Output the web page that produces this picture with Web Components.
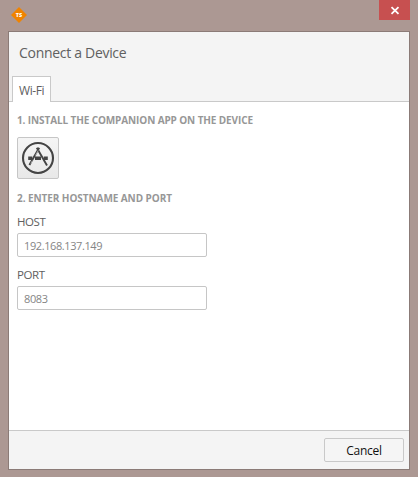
<!DOCTYPE html>
<html lang="en">
<head>
<meta charset="utf-8">
<title>Connect a Device</title>
<style>
html, body { margin: 0; height: 100%; overflow: hidden; }
body { font-family: "Open Sans", "Noto Sans", sans-serif; color: #606060; }
</style>
</head>
<body>
<app-window>
  <dialog-header slot="header" heading="Connect a Device" tab="Wi-Fi"></dialog-header>
  <section-title>1. INSTALL THE COMPANION APP ON THE DEVICE</section-title>
  <store-button></store-button>
  <section-title style="--ls:-0.07px;margin-bottom:7px">2. ENTER HOSTNAME AND PORT</section-title>
  <text-field label="HOST" value="192.168.137.149"></text-field>
  <text-field label="PORT" value="8083"></text-field>
  <push-button slot="footer">Cancel</push-button>
</app-window>
<script>
const define = (name, render) => customElements.define(name, class extends HTMLElement {
  connectedCallback() {
    if (!this.shadowRoot) this.attachShadow({ mode: "open" }).innerHTML = render(this);
  }
});

define("app-window", () => `<style>
:host { display: flex; flex-direction: column; box-sizing: border-box; width: 418px; height: 477px; padding: 0 8px 7px; background: #ac9893; }
.bar { display: flex; justify-content: space-between; height: 31px; flex: none; }
.logo { margin: 7px 0 0 3px; width: 16px; height: 16px; display: block; }
.close { width: 31px; height: 20px; background: #c75050; display: block; }
.client { flex: 1; display: flex; flex-direction: column; border: 1px solid #8b7b77; background: #fff; min-height: 0; }
main { flex: 1; padding: 10px 8px 0; }
footer { box-sizing: border-box; height: 39px; border-top: 1px solid #c9c9c9; background: #f4f4f4; padding: 7px 5px 0 0; display: flex; justify-content: flex-end; align-items: flex-start; }
</style>
<div class="bar">
  <svg class="logo" viewBox="0 0 16 16"><path d="M8 0 16 8 8 16 0 8Z" fill="#f08300"/><text x="8" y="10" text-anchor="middle" font-family="Open Sans" font-size="5.5" font-weight="800" fill="#fff">TS</text></svg>
  <svg class="close" viewBox="0 0 31 20"><path d="M12.5 7.2 19.5 13.8M19.5 7.2 12.5 13.8" stroke="#fff" stroke-width="1.8"/></svg>
</div>
<div class="client"><slot name="header"></slot><main><slot></slot></main><footer><slot name="footer"></slot></footer></div>`);

define("dialog-header", el => `<style>
:host { display: flex; flex-direction: column; justify-content: space-between; box-sizing: border-box; height: 70px; background: #f4f4f4; border-bottom: 1px solid #c9c9c9; }
.h { font-size: 14px; line-height: 20px; margin: 11px 0 0 10px; letter-spacing: -0.3px; white-space: nowrap; }
.tab { box-sizing: border-box; width: 39px; height: 26px; margin: 0 0 -1px 3px; border: 1px solid #c9c9c9; border-bottom: 0; background: #fff; font-size: 12px; line-height: 27px; padding-left: 6px; letter-spacing: -0.4px; white-space: nowrap; }
</style><div class="h">${el.getAttribute("heading")}</div><div class="tab">${el.getAttribute("tab")}</div>`);

define("section-title", () => `<style>
:host { display: block; height: 16px; line-height: 16px; font-size: 10px; font-weight: 700; color: #979797; letter-spacing: var(--ls, -0.11px); white-space: nowrap; }
</style><slot></slot>`);

define("store-button", () => `<style>
:host { display: flex; align-items: center; justify-content: center; box-sizing: border-box; width: 42px; height: 42px; margin: 9px 0 11px; border: 1px solid #c6c6c6; border-radius: 2px; background: linear-gradient(#f5f5f5, #e8e8e8); }
svg { width: 34px; height: 34px; }
</style><svg viewBox="0 0 34 34" fill="none" stroke="#444">
<circle cx="17" cy="17" r="15" stroke-width="2.1"/>
<path d="M7.2 17.3H11.3M14 17.3H20M22.8 17.3H26.8" stroke-width="3.4"/>
<path d="M18.2 6.8 8.4 24M15.8 6.8 26 24.5" stroke-width="1.9"/>
<path d="M17.2 9.5 14.5 14.5M9.8 22.5 11.4 19.7" stroke="#eee" stroke-width=".6"/>
</svg>`);

define("text-field", el => `<style>
:host { display: block; width: 190px; margin-bottom: 9px; }
label { display: block; font-size: 11.5px; line-height: 18px; height: 20px; letter-spacing: -0.4px; }
.box { box-sizing: border-box; height: 24px; border: 1px solid #c6c6c6; border-radius: 2px; padding-left: 6px; font-size: 11px; line-height: 23px; letter-spacing: -0.4px; color: #858585; background: #fff; }
</style><label>${el.getAttribute("label")}</label><div class="box">${el.getAttribute("value")}</div>`);

define("push-button", () => `<style>
:host { display: block; box-sizing: border-box; width: 80px; height: 24px; border: 1px solid #c9c9c9; border-radius: 2px; background: #f5f5f5; text-align: center; font-size: 12px; line-height: 24px; letter-spacing: -0.25px; color: #111; }
</style><slot></slot>`);
</script>
</body>
</html>
